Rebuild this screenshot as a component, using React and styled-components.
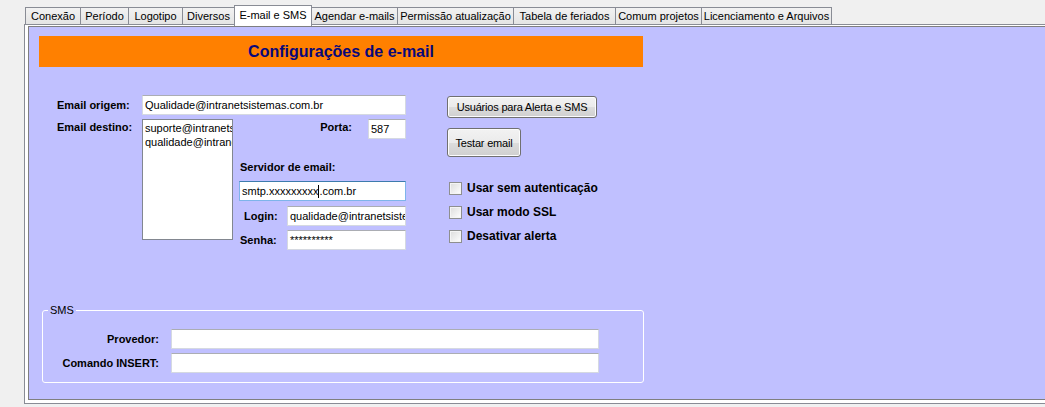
import React from "react";
import styled, { createGlobalStyle } from "styled-components";

const Global = createGlobalStyle`
  html, body { margin: 0; padding: 0; background: #f0f0f0; }
  body { font-family: "Liberation Sans", Arial, sans-serif; font-size: 11px; color: #000; }
  #root { width: 1045px; height: 407px; overflow: hidden; }
  * { box-sizing: border-box; }
`;

const Page = styled.div`
  width: 1045px;
  height: 407px;
  overflow: hidden;
  background: #f0f0f0;
`;

const TabStrip = styled.div`
  display: flex;
  align-items: flex-end;
  height: 24px;
  padding-left: 26px;
`;

const Tab = styled.div`
  position: relative;
  flex: none;
  width: ${(p) => p.$w}px;
  height: ${(p) => (p.$active ? 21 : 17)}px;
  margin-bottom: ${(p) => (p.$active ? -2 : 0)}px;
  z-index: ${(p) => (p.$active ? 2 : 1)};
  display: flex;
  align-items: center;
  justify-content: center;
  padding-bottom: ${(p) => (p.$active ? 3 : 0)}px;
  border: 1px solid #898c95;
  border-bottom: none;
  margin-left: -1px;
  background: ${(p) =>
    p.$active ? "#ffffff" : "linear-gradient(#f2f2f2, #e4e4e4)"};
  font-size: 11px;
  white-space: nowrap;
  color: #000;
`;

const TabPanel = styled.div`
  margin-left: 24px;
  width: 1030px;
  height: 380px;
  border: 1px solid #898c95;
  background: #ffffff;
  padding: 1px 0 3px 3px;
`;

const Content = styled.div`
  height: 100%;
  border: 1px solid #7f7f7f;
  border-right: none;
  background: #c0c0ff;
  padding: 9px 0 0 10px;
`;

const Header = styled.div`
  width: 604px;
  height: 31px;
  background: #ff8000;
  display: flex;
  align-items: center;
  justify-content: center;
  font-size: 16px;
  font-weight: bold;
  color: #08087a;
`;

const FormArea = styled.div`
  display: flex;
  align-items: flex-start;
  margin-top: 28px;
  margin-left: 18px;
`;

const LeftGrid = styled.div`
  display: grid;
  grid-template-columns: 85px 91px 6px 167px;
  grid-template-rows: 20px auto;
  row-gap: 4px;
`;

const Label = styled.div`
  font-weight: bold;
  font-size: 11px;
  line-height: 13px;
  white-space: nowrap;
  padding-left: ${(p) => p.$indent || 0}px;
  padding-top: ${(p) => p.$top || 0}px;
  align-self: ${(p) => p.$align || "center"};
  text-align: ${(p) => (p.$right ? "right" : "left")};
`;

const Field = styled.div`
  height: 20px;
  width: ${(p) => (p.$w ? p.$w + "px" : "auto")};
  background: #fff;
  border: 1px solid ${(p) => (p.$focus ? "#7eb4ea" : "#d5d9e1")};
  border-top-color: ${(p) => (p.$focus ? "#3d7bad" : "#abadb3")};
  padding: 0 2px;
  display: flex;
  align-items: center;
  font-size: 11px;
  white-space: nowrap;
  overflow: hidden;
  grid-column: ${(p) => p.$col || "auto"};
`;

const Caret = styled.span`
  display: inline-block;
  width: 1px;
  height: 13px;
  background: #000;
`;

const ListBox = styled.div`
  grid-column: 2;
  height: 121px;
  background: #fff;
  border: 1px solid #828790;
  padding: 1px 2px;
  font-size: 11px;
  line-height: 14px;
  overflow: hidden;
  white-space: nowrap;
`;

const SubForm = styled.div`
  grid-column: 4;
  display: flex;
  flex-direction: column;
  align-items: stretch;
`;

const PortaRow = styled.div`
  display: flex;
  justify-content: flex-end;
  align-items: flex-start;
  gap: 16px;
`;

const ServerLabel = styled(Label)`
  align-self: flex-start;
  margin-top: 22px;
  padding-left: 1px;
`;

const ServerField = styled(Field)`
  margin-top: 7px;
`;

const CredGrid = styled.div`
  margin-top: 5px;
  display: grid;
  grid-template-columns: 48px 119px;
  grid-auto-rows: 20px;
  row-gap: 4px;
`;

const RightBlock = styled.div`
  margin-left: 41px;
  margin-top: 1px;
  display: flex;
  flex-direction: column;
  align-items: flex-start;
`;

const Button = styled.div`
  width: ${(p) => p.$w}px;
  height: ${(p) => p.$h}px;
  margin-top: ${(p) => p.$mt || 0}px;
  border: 1px solid #707070;
  border-radius: 3px;
  background: linear-gradient(#f2f2f2 0%, #ebebeb 50%, #dddddd 51%, #cfcfcf 100%);
  box-shadow: inset 0 0 0 1px #fcfcfc;
  display: flex;
  align-items: center;
  justify-content: center;
  font-size: 11px;
  letter-spacing: -0.2px;
  white-space: nowrap;
`;

const CheckList = styled.div`
  margin-top: 23px;
  display: flex;
  flex-direction: column;
  gap: 8px;
`;

const CheckRow = styled.div`
  display: flex;
  align-items: center;
  gap: 5px;
  height: 16px;
  padding-left: 2px;
`;

const Box = styled.span`
  width: 13px;
  height: 13px;
  border: 1px solid #8e8f8f;
  background: linear-gradient(135deg, #dcdcdc 0%, #f4f4f4 70%, #ffffff 100%);
  box-shadow: inset 0 0 0 1px #f4f4f4;
`;

const CheckText = styled.span`
  font-weight: bold;
  font-size: 12px;
`;

const GroupBox = styled.div`
  position: relative;
  margin-top: 60px;
  margin-left: 3px;
  width: 602px;
  height: 73px;
  border: 1px solid #ffffff;
  border-radius: 3px;
  padding-top: 18px;
`;

const Legend = styled.span`
  position: absolute;
  top: -7px;
  left: 5px;
  padding: 0 2px;
  background: #c0c0ff;
  font-size: 11px;
  line-height: 13px;
`;

const GroupGrid = styled.div`
  display: grid;
  grid-template-columns: 116px 428px;
  column-gap: 12px;
  row-gap: 4px;
  grid-auto-rows: 20px;
`;

const tabs = [
  ["Conexão", 56],
  ["Período", 49],
  ["Logotipo", 55],
  ["Diversos", 53],
  ["E-mail e SMS", 78, true],
  ["Agendar e-mails", 87],
  ["Permissão atualização", 117],
  ["Tabela de feriados", 103],
  ["Comum projetos", 87],
  ["Licenciamento e Arquivos", 131],
];

export default function App() {
  return (
    <Page>
      <Global />
      <TabStrip>
        {tabs.map(([t, w, a]) => (
          <Tab key={t} $w={w} $active={a}>
            {t}
          </Tab>
        ))}
      </TabStrip>
      <TabPanel>
        <Content>
          <Header>Configurações de e-mail</Header>
          <FormArea>
            <LeftGrid>
              <Label>Email origem:</Label>
              <Field $col="2 / 5">Qualidade@intranetsistemas.com.br</Field>
              <Label $align="start" $top={2}>Email destino:</Label>
              <ListBox>
                suporte@intranetsistemas.com.br
                <br />
                qualidade@intranetsistemas.com.br
              </ListBox>
              <SubForm>
                <PortaRow>
                  <Label $align="start" $top={2}>Porta:</Label>
                  <Field $w={38}>587</Field>
                </PortaRow>
                <ServerLabel>Servidor de email:</ServerLabel>
                <ServerField $focus>
                  smtp.xxxxxxxxx<Caret />.com.br
                </ServerField>
                <CredGrid>
                  <Label $indent={5}>Login:</Label>
                  <Field>qualidade@intranetsistemas.com.br</Field>
                  <Label $indent={1}>Senha:</Label>
                  <Field>**********</Field>
                </CredGrid>
              </SubForm>
            </LeftGrid>
            <RightBlock>
              <Button $w={150} $h={22}>Usuários para Alerta e SMS</Button>
              <Button $w={74} $h={29} $mt={10}>Testar email</Button>
              <CheckList>
                <CheckRow>
                  <Box />
                  <CheckText>Usar sem autenticação</CheckText>
                </CheckRow>
                <CheckRow>
                  <Box />
                  <CheckText>Usar modo SSL</CheckText>
                </CheckRow>
                <CheckRow>
                  <Box />
                  <CheckText>Desativar alerta</CheckText>
                </CheckRow>
              </CheckList>
            </RightBlock>
          </FormArea>
          <GroupBox>
            <Legend>SMS</Legend>
            <GroupGrid>
              <Label $right>Provedor:</Label>
              <Field />
              <Label $right>Comando INSERT:</Label>
              <Field />
            </GroupGrid>
          </GroupBox>
        </Content>
      </TabPanel>
    </Page>
  );
}
